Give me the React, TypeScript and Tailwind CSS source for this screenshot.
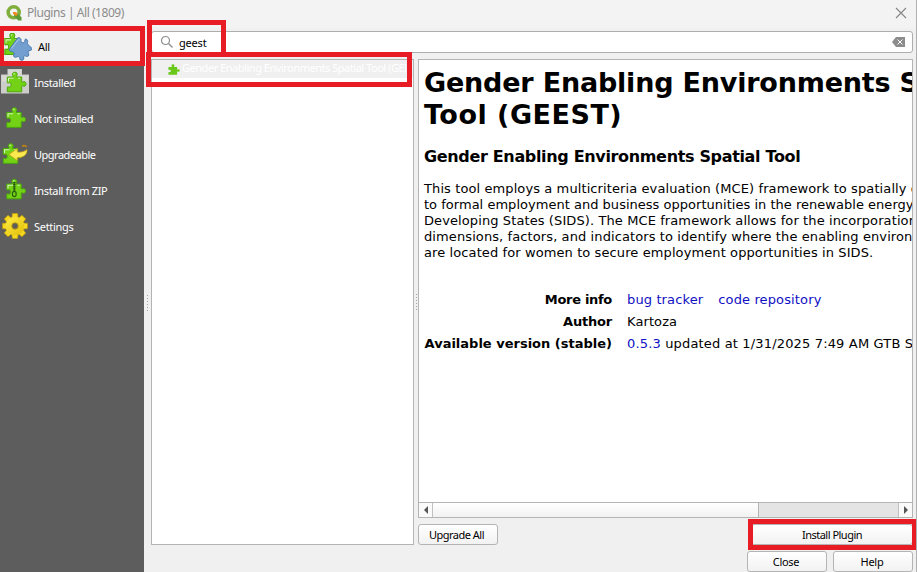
import type { ReactNode } from "react";

const PIECE =
  "M.8 5.500H6c.8 0 .6-.8.200-1.400C5.200 2.200 6.300.7 8.300.7s3.100 1.500 2.100 3.400c-.4.6-.6 1.400.2 1.400h4.600v4.300c0 .9.700 1 1.300.6 1.500-1 3 .2 3 2s-1.500 3-3 2c-.6-.4-1.300-.3-1.300.6v5.300H.8V16c0-.9.600-.9 1.200-.6 1.500.8 2.700-.4 2.700-2s-1.200-2.800-2.700-2c-.6.3-1.200.3-1.200-.6z";

function Piece() {
  return (
    <>
      <path d={PIECE} fill="#73d216" stroke="#4aa80a" strokeWidth="1" />
      <path d="M2 10V6.800h5M7.300 3c.1-.7.500-1 1-1M11.500 6.800h2.300" fill="none" stroke="#fff" strokeOpacity=".7" strokeWidth="1.100" />
    </>
  );
}

function Icon({ children }: { children: ReactNode }) {
  return (
    <svg className="block h-7 w-7 shrink-0" viewBox="0 0 28 28">
      {children}
    </svg>
  );
}

function AllIcon() {
  return (
    <Icon>
      <g transform="translate(0 -.5) scale(1 1.080)"><Piece /></g>
      <path
        transform="translate(-.5 -.5)"
        d="M14 5.500c1.500-1 3 .1 3.600 1.800-.9 1.800.4 3.300 2.300 2.900 1.300-.3 1.600-1.300 1.400-2.300-.1-1.200 1-1.700 1.900-1 .8.700 1.300 1.700.8 3.100-.4 1.300.3 2 1.800 3.200l2 2c.8 1 .6 2.300-.6 2.700-1.600.4-2.700.4-2.600 1.600.2 1.300 1 1.800.6 3.200-.4 1.300-1.700 1.500-3 .9-1.200-.5-2.200-.2-2.100 1 .2 1.200.6 2.400-1 3-1.800.7-3-.5-2.800-1.900.1-1.300-.9-1.800-2.200-1.500-1.500.4-3 1-3.900-.3-.7-1.300.9-2.300.2-3.600-.6-1.200-2-.8-3.600-1.500-1.300-.6-1.200-1.800-.4-2.700z"
        fill="#729fcf"
        stroke="#4577b1"
      />
      <path d="m7.200 15.500 7-8.700c.7-.6 1.300-.2 1.700.6" fill="none" stroke="#b5cfeb" />
    </Icon>
  );
}

function InstalledIcon() {
  return (
    <Icon>
      <path d="M6.500 0h14.500v5.500h7v19H0v-19h6.500z" fill="#cccdc9" />
      <path d="M7.500 1h12.500v5.500h7v6H1v-6h6.500z" fill="#d8d9d5" />
      <g transform="translate(5.500 2.500)"><Piece /></g>
    </Icon>
  );
}

function UpgradeIcon() {
  return (
    <Icon>
      <g transform="translate(1.500 2)"><Piece /></g>
      <path d="m8 13.500 8.300-6v3.600c4 .4 7-.6 9.700-2.600.4 5.500-3.700 8.200-9.700 8v3z" fill="#fce94f" stroke="#c0a015" strokeWidth=".7" />
      <path d="M21 5.300c1.500-1 4-1 4.500.9" fill="none" stroke="#b98412" strokeWidth="1.600" />
    </Icon>
  );
}

function ZipIcon() {
  return (
    <Icon>
      <g transform="translate(5 1.500)"><Piece /></g>
      <path d="M13.300 5v9.500" stroke="#2c6010" strokeWidth="2.600" strokeDasharray="1.200 .9" />
      <path d="M13.300 5v9.500" stroke="#2c6010" strokeWidth="1" />
      <ellipse cx="13.300" cy="17" rx="1.900" ry="2.700" fill="#73d216" stroke="#2c6010" strokeWidth="1.200" />
    </Icon>
  );
}

function GearIcon() {
  return (
    <Icon>
      <defs>
        <linearGradient id="gold" gradientUnits="userSpaceOnUse" x1="3" y1="2" x2="25" y2="25">
          <stop offset="0" stopColor="#fff04a" />
          <stop offset="1" stopColor="#e0b800" />
        </linearGradient>
      </defs>
      {[0, 45, 90, 135, 180, 225, 270, 315].map((a) => (
        <path key={a} transform={`rotate(${a} 14 13)`} d="m10.800 5.500.6-5h5.200l.6 5z" fill="#f5d822" stroke="#c39c05" strokeWidth=".7" />
      ))}
      <circle cx="14" cy="13" r="9.300" fill="url(#gold)" />
      <circle cx="14" cy="13" r="3.200" fill="#5d5d5d" stroke="#b8950a" strokeWidth=".9" />
    </Icon>
  );
}

const ITEMS = [
  { label: "Installed", icon: <InstalledIcon />, cls: "tracking-[-0.35px]" },
  { label: "Not installed", icon: <Icon><g transform="translate(5 2)"><Piece /></g></Icon>, cls: "tracking-[-0.5px]" },
  { label: "Upgradeable", icon: <UpgradeIcon />, cls: "tracking-[-0.5px]" },
  { label: "Install from ZIP", icon: <ZipIcon />, cls: "tracking-[-0.36px]" },
  { label: "Settings", icon: <GearIcon />, cls: "tracking-[-0.3px]" },
];

const BUTTON =
  "flex h-[21px] items-center justify-center rounded-[3px] border border-[#b4b4b4] bg-linear-to-b from-white to-[#f2f2f2] text-black";

function Grip() {
  return (
    <div className="flex flex-col gap-[2px]">
      {[0, 1, 2, 3, 4, 5].map((i) => (
        <i key={i} className="block h-px w-px bg-[#a5a5a5]" />
      ))}
    </div>
  );
}

export default function App() {
  return (
    <div className="relative flex h-[572px] w-[917px] flex-col overflow-hidden border-r border-[#b0b0b0] bg-[#f0f0f0] font-['Noto_Sans','Open_Sans',sans-serif] text-[11px] leading-4">
      <header className="flex h-[28px] shrink-0 items-center bg-[#f3f3f3] pb-[3px] pl-[6px] text-[12px] text-[#8c8c8c]">
        <svg className="mr-[5px] h-4 w-4" viewBox="0 0 16 16">
          <circle cx="7.700" cy="7.300" r="5.500" fill="none" stroke="#7fae3c" strokeWidth="3.600" />
          <path d="M8 8h3.200l4.300 4.300v3.200h-3.200L8 11.200z" fill="#5d9a34" />
          <path d="M7 7h3l2 2-2 2.200-3-2.500z" fill="#ee8c22" />
        </svg>
        <span className="whitespace-nowrap tracking-[-0.45px]">Plugins | All (1809)</span>
        <svg className="mr-[9px] ml-auto h-3 w-3" viewBox="0 0 12 12">
          <path d="m1 1 10 10M11 1 1 11" stroke="#858585" strokeWidth="1.100" />
        </svg>
      </header>

      <div className="flex min-h-0 flex-1">
        <nav className="w-[144px] shrink-0 bg-[#5d5d5d]">
          <div className="flex h-[37px] items-center bg-[#f0f0f0] pl-[4px] text-black">
            <AllIcon />
            <span className="ml-[6px] tracking-[-0.3px]">All</span>
          </div>
          {ITEMS.map((item) => (
            <div key={item.label} className="flex h-9 items-center gap-1 pl-px text-white">
              {item.icon}
              <span className={`ml-px whitespace-nowrap ${item.cls}`}>{item.label}</span>
            </div>
          ))}
        </nav>

        <main className="flex min-w-0 flex-1 pt-[3px] pr-[3px]">
          <div className="flex w-[7px] shrink-0 justify-center pt-[264px]"><Grip /></div>
          <div className="flex min-w-0 flex-1 flex-col">
            <div className="flex h-[22px] shrink-0 items-center rounded-[3px] border border-[#adadad] bg-white pr-[7px] pl-2">
              <svg className="h-[14px] w-[14px]" viewBox="0 0 14 14" fill="none" stroke="#8c8c8c" strokeWidth="1.200">
                <circle cx="5.500" cy="5.500" r="4" />
                <path d="m8.500 8.500 4 4" />
              </svg>
              <span className="mt-px ml-[5px] tracking-[-0.2px]">geest</span>
              <svg className="ml-auto h-[10px] w-[13px]" viewBox="0 0 13 10">
                <path d="M4 0h9v10H4L0 5z" fill="#8c8c8c" />
                <path d="m5.500 2.500 5 5m0-5-5 5" stroke="#fff" />
              </svg>
            </div>

            <div className="mt-[6px] flex h-[486px]">
              <div className="w-[263px] shrink-0 border border-[#b4b4b4] bg-white">
                <div className="flex h-[18px] items-center overflow-hidden bg-[#f0f0f0] pl-4 text-white">
                  <svg className="h-[11px] w-3 shrink-0" viewBox="0 0 20 21" preserveAspectRatio="none"><path d={PIECE} fill="#69c817" /></svg>
                  <span className="-mt-[2px] ml-[2px] w-[224px] overflow-hidden whitespace-nowrap tracking-[-0.47px]">Gender Enabling Environments Spatial Tool (GEEST)</span>
                </div>
              </div>
              <div className="flex w-[4px] shrink-0 justify-center pt-[235px]"><Grip /></div>
              <div className="flex min-w-0 flex-1 flex-col">
                <section className="flex h-[459px] flex-col overflow-hidden border border-[#b4b4b4] bg-white">
                  <div className="min-h-0 flex-1 overflow-hidden pt-[7px] pl-[5px] font-['DejaVu_Sans',Verdana,sans-serif] text-[13px] leading-4 whitespace-nowrap text-black">
                    <h1 className="text-[27px] leading-8 font-bold">
                      <span className="block tracking-[-0.2px]">Gender Enabling Environments Spatial</span>
                      <span className="block tracking-[0.5px]">Tool (GEEST)</span>
                    </h1>
                    <h3 className="mt-4 text-[16px] leading-5 font-bold tracking-[-0.34px]">Gender Enabling Environments Spatial Tool</h3>
                    <div className="mt-[14px] tracking-[0.1px]">
                      <p>This tool employs a multicriteria evaluation (MCE) framework to spatially determine access</p>
                      <p className="tracking-[0.02px]">to formal employment and business opportunities in the renewable energy sector in Small</p>
                      <p>Developing States (SIDS). The MCE framework allows for the incorporation of multiple</p>
                      <p>dimensions, factors, and indicators to identify where the enabling environments</p>
                      <p>are located for women to secure employment opportunities in SIDS.</p>
                    </div>
                    <div className="mt-[28px] grid grid-cols-[188px_auto] gap-x-[15px] leading-[22px]">
                      <b className="text-right tracking-[-0.3px]">More info</b>
                      <span className="tracking-[0.13px] text-[#1010c4]"><span>bug tracker</span><span className="ml-[15px]">code repository</span></span>
                      <b className="text-right tracking-[-0.2px]">Author</b>
                      <span className="tracking-[0.1px]">Kartoza</span>
                      <b className="text-right">Available version (stable)</b>
                      <span className="tracking-[0.16px]"><span className="text-[#1010c4]">0.5.3</span> updated at 1/31/2025 7:49 AM GTB Standard Time</span>
                    </div>
                  </div>
                  <div className="flex h-[15px] shrink-0 border-t border-[#b4b4b4] bg-[#e4e4e4]">
                    <div className="flex w-[14px] items-center justify-center border-r border-[#c0c0c0] bg-[#fafafa]">
                      <svg className="h-2 w-1" viewBox="0 0 4 8"><path d="M4 0v8L0 4z" fill="#555" /></svg>
                    </div>
                    <div className="w-[326px] border-r border-[#b4b4b4] bg-linear-to-b from-white to-[#f2f2f2]" />
                    <div className="ml-auto flex w-[14px] items-center justify-center border-l border-[#c0c0c0] bg-[#fafafa]">
                      <svg className="h-2 w-1" viewBox="0 0 4 8"><path d="M0 0v8l4-4z" fill="#555" /></svg>
                    </div>
                  </div>
                </section>
                <div className="mt-[6px] flex justify-between">
                  <button className={`${BUTTON} w-[80px] pr-[3px] tracking-[-0.5px]`}>Upgrade All</button>
                  <button className={`${BUTTON} w-[162px] tracking-[-0.5px]`}>Install Plugin</button>
                </div>
              </div>
            </div>
            <div className="mt-[6px] flex justify-end gap-[6px]">
              <button className={`${BUTTON} w-[80px] pr-[2px] tracking-[-0.3px]`}>Close</button>
              <button className={`${BUTTON} w-[80px] pr-[2px] tracking-[-0.3px]`}>Help</button>
            </div>
          </div>
        </main>
      </div>

      <div className="absolute top-[26px] left-0 h-[40px] w-[145px] border-[5px] border-l-4 border-[#e81c24]" />
      <div className="absolute top-[20px] left-[147px] h-[37px] w-[79px] border-[5px] border-[#e81c24]" />
      <div className="absolute top-[52px] left-[146px] h-[35px] w-[266px] border-[5px] border-[#e81c24]" />
      <div className="absolute top-[519px] left-[748px] h-[31px] w-[169px] border-[5px] border-[#e81c24]" />
    </div>
  );
}
